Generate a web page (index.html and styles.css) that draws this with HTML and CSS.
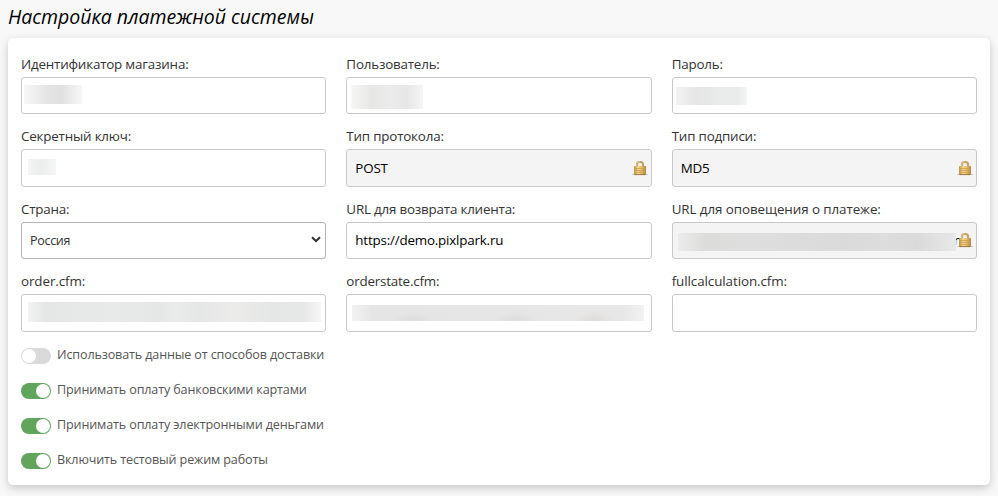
FILE: index.html
```html
<!DOCTYPE html>
<html lang="ru">
<head>
<meta charset="utf-8">
<title>Настройка платежной системы</title>
<link rel="stylesheet" href="styles.css">
</head>
<body>
<svg class="defs" width="0" height="0" aria-hidden="true">
  <defs>
    <linearGradient id="gold" x1="0" x2="1" y1="0" y2="0">
      <stop offset="0" stop-color="#bd9248"/><stop offset=".35" stop-color="#f5da90"/><stop offset=".65" stop-color="#e6bd66"/><stop offset="1" stop-color="#b08345"/>
    </linearGradient>
    <symbol id="lock" viewBox="0 0 16 16">
      <path d="M0 14.5h16" stroke="#c9c9c9"/>
      <path d="M5 7V4.2Q5 2 8 2T11 4.2V7" fill="none" stroke="#c2a262" stroke-width="2.2"/>
      <path d="M4.7 6V4Q5 1.7 8 1.6" fill="none" stroke="#e2cf9c" stroke-width=".8"/>
      <rect x="2" y="6" width="12" height="9" rx=".8" fill="url(#gold)"/>
      <path d="M2.5 8.5h11M2.5 10.5h11M2.5 12.5h11" stroke="#c4964b" stroke-width=".7"/>
      <path d="M2.5 14.6h11" stroke="#8a602f" stroke-width=".8"/>
    </symbol>
  </defs>
</svg>
<h1 class="title"><span>Настройка платежной системы</span></h1>
<main class="card">
  <div class="grid">
    <div class="field"><label>Идентификатор магазина:</label><div class="box"><i class="mask mask-shop"></i></div></div>
    <div class="field"><label>Пользователь:</label><div class="box"><i class="mask mask-user"></i></div></div>
    <div class="field"><label>Пароль:</label><div class="box"><i class="mask mask-pass"></i></div></div>
    <div class="field"><label>Секретный ключ:</label><div class="box"><i class="mask mask-key"></i></div></div>
    <div class="field"><label>Тип протокола:</label><div class="box locked"><span class="value">POST</span><svg class="lock"><use href="#lock"/></svg></div></div>
    <div class="field"><label>Тип подписи:</label><div class="box locked"><span class="value">MD5</span><svg class="lock"><use href="#lock"/></svg></div></div>
    <div class="field"><label>Страна:</label><div class="box select"><span class="value">Россия</span><svg class="chevron" viewBox="0 0 10 7"><path d="M1 1.2 5 5 9 1.2" fill="none" stroke="#333" stroke-width="2"/></svg></div></div>
    <div class="field"><label>URL для возврата клиента:</label><div class="box"><span class="value">https://demo.pixlpark.ru</span></div></div>
    <div class="field"><label class="wide">URL для оповещения о платеже:</label><div class="box locked"><i class="mask mask-notify"></i><span class="tail">ne</span><svg class="lock"><use href="#lock"/></svg></div></div>
    <div class="field"><label class="wide">order.cfm:</label><div class="box"><i class="mask mask-order"></i></div></div>
    <div class="field"><label>orderstate.cfm:</label><div class="box"><i class="mask mask-state"></i></div></div>
    <div class="field"><label class="wide">fullcalculation.cfm:</label><div class="box"></div></div>
  </div>
  <div class="options">
    <div class="option"><i class="toggle"></i><span>Использовать данные от способов доставки</span></div>
    <div class="option"><i class="toggle on"></i><span>Принимать оплату банковскими картами</span></div>
    <div class="option"><i class="toggle on"></i><span>Принимать оплату электронными деньгами</span></div>
    <div class="option"><i class="toggle on"></i><span>Включить тестовый режим работы</span></div>
  </div>
</main>
</body>
</html>
```
FILE: styles.css
```css
* { box-sizing: border-box; }
body {
  margin: 0;
  padding: 0 8px;
  height: 496px;
  overflow: hidden;
  background: #f8f8f8;
  font-family: "Open Sans", "Noto Sans", sans-serif;
  font-size: 13.4px;
  letter-spacing: -0.2px;
  color: #333;
}
.defs { position: absolute; }
.title {
  margin: 0;
  height: 38px;
  padding-top: 4px;
  font-size: 19.5px;
  line-height: 26px;
  font-weight: 400;
  font-style: italic;
  letter-spacing: -0.03px;
  color: #000;
  white-space: nowrap;
}
.card {
  height: 447px;
  padding: 16px 13px 0;
  background: #fff;
  border-radius: 5px;
  box-shadow: 0 3px 8px rgba(0, 0, 0, .2);
}
.grid {
  display: grid;
  grid-template-columns: repeat(3, 1fr);
  column-gap: 20px;
  row-gap: 12px;
}
.field { min-width: 0; height: 60.4px; }
label {
  display: block;
  width: max-content;
  height: 23px;
  line-height: 20px;
  white-space: nowrap;
}
label.wide { letter-spacing: -0.08px; }
.box {
  position: relative;
  display: flex;
  align-items: center;
  height: 37.4px;
  padding: 0 3px 0 8px;
  border: 1px solid #c8c8c8;
  border-radius: 3px;
  background: #fff;
}
.locked { background: #f4f4f4; }
.value { color: #000; white-space: nowrap; line-height: 20px; }
.select { border-color: #b2b2b2; padding: 2px 4px 0 8px; }
.select .value { color: #333; font-size: 12.5px; letter-spacing: -0.3px; }
.lock { width: 16px; height: 16px; margin-left: auto; position: relative; }
.chevron { width: 10px; height: 7px; margin: -3px 0 0 auto; }
.tail { color: #000; margin: 0 -20px 0 -2px; }

.mask { display: block; flex: none; align-self: flex-start; }
.mask-shop { width: 58px; height: 19px; margin: 7px 0 0 -6px; background: linear-gradient(90deg, #f7f7f7, #e4e4e4 40%, #e1e1e1 65%, #f7f7f7); }
.mask-user { width: 72px; height: 24px; margin: 7px 0 0 -4px; background: linear-gradient(90deg, #f6f6f6, #e7e7e6 28%, #ebebeb 55%, #e7e7e7 78%, #f5f5f5); }
.mask-pass { width: 71px; height: 18px; margin: 9px 0 0 -5px; background: linear-gradient(90deg, #f3f3f3, #e5e5e5 30%, #eaebeb 65%, #e9ebea 85%, #f4f5f5); }
.mask-key { width: 28px; height: 16px; margin: 9px 0 0 -2px; background: linear-gradient(90deg, #f5f5f5, #ebecec 45%, #f7f7f7); }
.mask-order { width: 293px; height: 20px; margin: 7px 0 0 -2px; background: linear-gradient(90deg, #f3f3f3, #e5e6e6 6%, #e8e9e9 30%, #e5e6e6 45%, #ebebeb 50%, #e5e6e6 58%, #ebebea 70%, #e5e6e6 83%, #e7e7e7 94%, #f5f5f5); }
.mask-state { width: 292px; height: 16px; margin: 10px 0 0 -3px; background: radial-gradient(ellipse 20px 9px at 21% 100%, #dddcdd, transparent), radial-gradient(ellipse 22px 9px at 56% 100%, #dddcdd, transparent), radial-gradient(ellipse 20px 9px at 83% 100%, #dddbd9, transparent), linear-gradient(90deg, #f2f2f2, #e6e5e6 7%, #e7e7e7 93%, #f2f2f2); }
.mask-notify { position: relative; z-index: 1; width: 278px; height: 18px; margin: 10px 0 0 -3px; background: linear-gradient(90deg, #ececec, #dcdcdb 10%, #dedede 25%, #dadada 60%, #dcdddc 75%, #dadada 86%, #e8e8e8); }

.options { display: flex; flex-direction: column; margin-top: 6.9px; }
.option {
  display: flex;
  align-items: center;
  height: 35px;
  gap: 6px;
  color: #555;
  font-size: 12.6px;
  letter-spacing: -0.15px;
  white-space: nowrap;
  line-height: 20px;
}
.option span { padding-bottom: 2px; }
.toggle {
  width: 30px;
  height: 16px;
  padding: 1px;
  border-radius: 8px;
  background: #dadada;
  display: flex;
}
.toggle::before { content: ""; width: 14px; height: 14px; border-radius: 50%; background: #fff; }
.toggle.on { background: #61a55c; justify-content: flex-end; }
```
